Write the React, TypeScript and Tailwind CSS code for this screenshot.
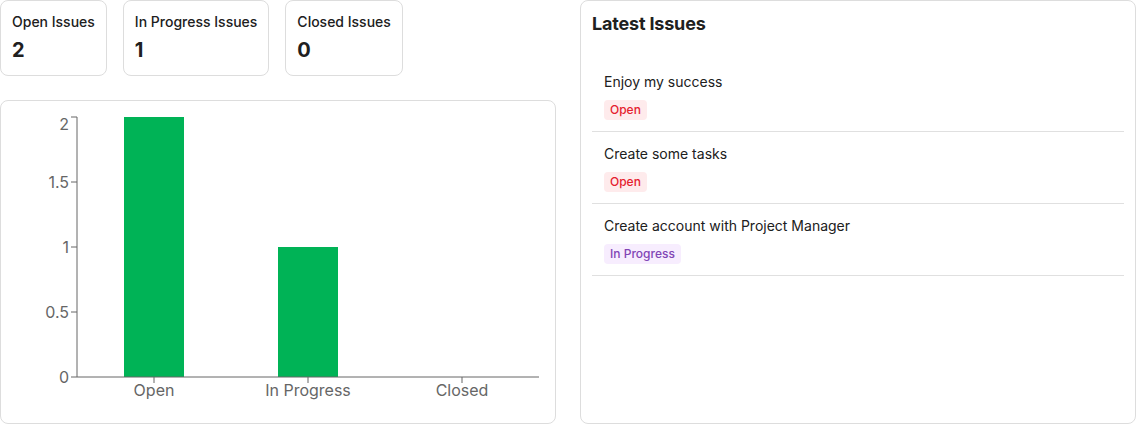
import React from "react";

const summary = [
  { label: "Open Issues", value: 2 },
  { label: "In Progress Issues", value: 1 },
  { label: "Closed Issues", value: 0 },
];

const issues = [
  { title: "Enjoy my success", status: "OPEN" },
  { title: "Create some tasks", status: "OPEN" },
  { title: "Create account with Project Manager", status: "IN_PROGRESS" },
];

function Badge({ status }: { status: string }) {
  if (status === "OPEN") {
    return (
      <span className="inline-flex h-5 items-center rounded-[4px] bg-[#feebec] px-[6px] text-[12px] font-medium leading-4 text-[#e5202e]">
        Open
      </span>
    );
  }
  return (
    <span className="inline-flex h-5 items-center rounded-[4px] bg-[#f7edfe] px-[6px] text-[12px] font-medium leading-4 text-[#8145b5]">
      In Progress
    </span>
  );
}

function Chart() {
  const left = 65;
  const right = 527;
  const top = 5;
  const bottom = 265;
  const ticks = [
    { v: "0", y: 265 },
    { v: "0.5", y: 200 },
    { v: "1", y: 135 },
    { v: "1.5", y: 70 },
    { v: "2", y: 5 },
  ];
  const cats = [
    { label: "Open", value: 2 },
    { label: "In Progress", value: 1 },
    { label: "Closed", value: 0 },
  ];
  const bw = (right - left) / cats.length;
  return (
    <svg width="532" height="300" className="block" style={{ fontFamily: "Inter, sans-serif" }}>
      {cats.map((c, i) => {
        const cx = left + bw * i + bw / 2;
        const h = (c.value / 2) * (bottom - top);
        return c.value > 0 ? (
          <rect key={c.label} x={cx - 30} y={bottom - h} width={60} height={h} fill="#00b356" />
        ) : null;
      })}
      <line x1={left} y1={bottom} x2={right} y2={bottom} stroke="#666" />
      <line x1={left} y1={top} x2={left} y2={bottom} stroke="#666" />
      {ticks.map((t) => (
        <g key={t.v}>
          <line x1={left - 6} y1={t.y} x2={left} y2={t.y} stroke="#666" />
          <text
            x={left - 8}
            y={t.v === "2" ? t.y + 12.5 : t.y + 5.7}
            textAnchor="end"
            fontSize="16"
            fill="#666"
          >
            {t.v}
          </text>
        </g>
      ))}
      {cats.map((c, i) => {
        const cx = left + bw * i + bw / 2;
        return (
          <g key={c.label}>
            <line x1={cx} y1={bottom} x2={cx} y2={bottom + 6} stroke="#666" />
            <text x={cx} y={bottom + 8 + 11.4} textAnchor="middle" fontSize="16" fill="#666">
              {c.label}
            </text>
          </g>
        );
      })}
    </svg>
  );
}

export default function App() {
  return (
    <div
      className="grid w-[1136px] grid-cols-2 gap-6 bg-white text-[#202020]"
      style={{ fontFamily: "Inter, 'Noto Sans', sans-serif" }}
    >
      <div className="flex flex-col gap-6">
        <div className="flex gap-4">
          {summary.map((s) => (
            <div key={s.label} className="rounded-lg border border-[#dddddd] p-[11px]">
              <div className="flex flex-col gap-1">
                <span className="text-sm font-medium leading-5">{s.label}</span>
                <span className="text-[20px] font-bold leading-7">{s.value}</span>
              </div>
            </div>
          ))}
        </div>
        <div className="rounded-lg border border-[#dddddd] p-[11px]">
          <Chart />
        </div>
      </div>
      <div className="rounded-lg border border-[#dddddd] p-[11px]">
        <h2 className="mb-[25px] text-[18px] font-bold leading-[23px] tracking-[-0.01em]">Latest Issues</h2>
        <div className="flex flex-col">
          {issues.map((issue) => (
            <div key={issue.title} className="border-b border-[#e0e0e0] p-3 pb-[11px]">
              <div className="flex flex-col items-start gap-2">
                <span className="text-sm leading-5">{issue.title}</span>
                <Badge status={issue.status} />
              </div>
            </div>
          ))}
        </div>
      </div>
    </div>
  );
}
